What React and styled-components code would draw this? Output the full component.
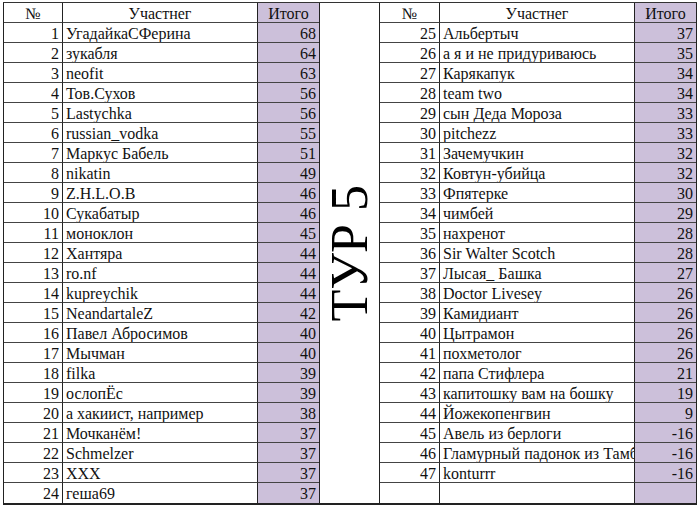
import React from "react";
import styled, { createGlobalStyle } from "styled-components";

const Global = createGlobalStyle`
  body {
    margin: 0;
    background: #ffffff;
    font-family: "Liberation Serif", "Times New Roman", serif;
  }
`;

const left = [
  [1, "УгадайкаСФерина", 68],
  [2, "зукабля", 64],
  [3, "neofit", 63],
  [4, "Тов.Сухов", 56],
  [5, "Lastychka", 56],
  [6, "russian_vodka", 55],
  [7, "Маркус Бабель", 51],
  [8, "nikatin", 49],
  [9, "Z.H.L.O.B", 46],
  [10, "Сукабатыр", 46],
  [11, "моноклон", 45],
  [12, "Хантяра", 44],
  [13, "ro.nf", 44],
  [14, "kupreychik", 44],
  [15, "NeandartaleZ", 42],
  [16, "Павел Абросимов", 40],
  [17, "Мычман", 40],
  [18, "filka", 39],
  [19, "ослопЁс", 39],
  [20, "а хакиист, например", 38],
  [21, "Мочканём!", 37],
  [22, "Schmelzer", 37],
  [23, "XXX", 37],
  [24, "геша69", 37],
];

const right = [
  [25, "Альбертыч", 37],
  [26, "а я и не придуриваюсь", 35],
  [27, "Карякапук", 34],
  [28, "team two", 34],
  [29, "сын Деда Мороза", 33],
  [30, "pitchezz", 33],
  [31, "Зачемучкин", 32],
  [32, "Ковтун-убийца", 32],
  [33, "Фпятерке", 30],
  [34, "чимбей", 29],
  [35, "нахренот", 28],
  [36, "Sir Walter Scotch", 28],
  [37, "Лысая_ Башка", 27],
  [38, "Doctor Livesey", 26],
  [39, "Камидиант", 26],
  [40, "Цытрамон", 26],
  [41, "похметолог", 26],
  [42, "папа Стифлера", 21],
  [43, "капитошку вам на бошку", 19],
  [44, "Йожекопенгвин", 9],
  [45, "Авель из берлоги", -16],
  [46, "Гламурный падонок из Тамбова", -16],
  [47, "konturrr", -16],
  ["", "", ""],
];

const Sheet = styled.div`
  display: flex;
  width: 694px;
  margin: 2px 0 0 3px;
  border-top: 1px solid #333;
  border-bottom: 2px solid #222;
`;

const Table = styled.div`
  display: grid;
  grid-template-columns: ${(p) => p.$num}px 195px 61px;
  grid-auto-rows: 20px;
  border-left: 1px solid #222;
  border-right: 1px solid #222;
`;

const Cell = styled.div`
  box-sizing: border-box;
  border-bottom: ${(p) => (p.$last ? "none" : "1px solid #444")};
  border-right: ${(p) => (p.$edge ? "none" : "1px solid #222")};
  background: ${(p) => (p.$total ? "#ccc0da" : "#ffffff")};
  color: #111;
  font-size: 16px;
  line-height: 17px;
  padding: 2px 3px 0 3px;
  text-align: ${(p) => p.$align || "left"};
  white-space: nowrap;
  overflow: hidden;
`;

const TitleColumn = styled.div`
  width: 60px;
  display: flex;
  align-items: center;
  justify-content: center;
`;

const Title = styled.div`
  writing-mode: vertical-rl;
  transform: rotate(180deg);
  font-size: 52px;
  line-height: 1;
  color: #000;
  white-space: nowrap;
`;

function Board({ rows, num }) {
  return (
    <Table $num={num}>
      <Cell $align="center">№</Cell>
      <Cell $align="center">Участнег</Cell>
      <Cell $align="center" $total $edge>
        Итого
      </Cell>
      {rows.map(([n, name, score], i) => {
        const last = i === rows.length - 1;
        return (
          <React.Fragment key={i}>
            <Cell $align="right" $last={last}>
              {n}
            </Cell>
            <Cell $last={last}>{name}</Cell>
            <Cell $align="right" $total $edge $last={last}>
              {score}
            </Cell>
          </React.Fragment>
        );
      })}
    </Table>
  );
}

export default function App() {
  return (
    <>
      <Global />
      <Sheet>
        <Board rows={left} num={59} />
        <TitleColumn>
          <Title>ТУР 5</Title>
        </TitleColumn>
        <Board rows={right} num={60} />
      </Sheet>
    </>
  );
}
